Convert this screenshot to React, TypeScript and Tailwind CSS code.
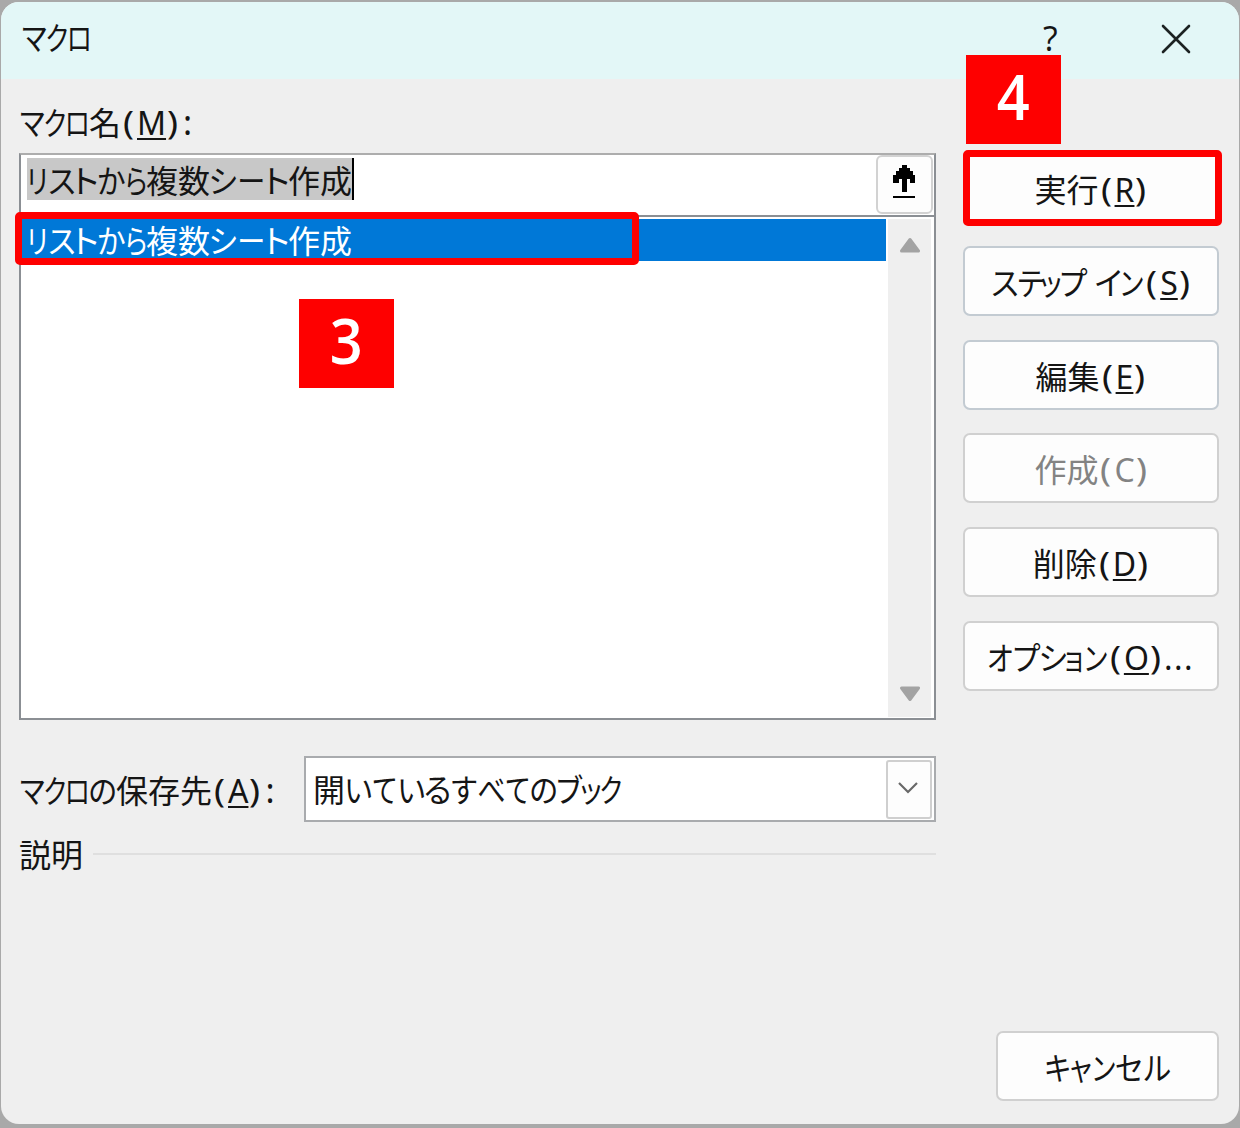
import type { ReactNode } from "react";

type Metric = {
  /** horizontal advance at 32px */
  adv: number;
  /** ink start and end inside the advance */
  ink: [number, number];
  /** ink start and end of the full-width glyph, in em */
  em: [number, number];
};

const KANA: Record<string, Metric> = {
  マ: { adv: 24.5, ink: [1.7, 24.5], em: [0.09, 0.91] },
  ク: { adv: 22.5, ink: [1.5, 20.7], em: [0.1, 0.87] },
  ロ: { adv: 23, ink: [2, 20.7], em: [0.14, 0.87] },
  の: { adv: 27, ink: [1, 26.3], em: [0.07, 0.93] },
  リ: { adv: 20.5, ink: [3.5, 18], em: [0.22, 0.78] },
  ス: { adv: 26.5, ink: [1.7, 26], em: [0.1, 0.9] },
  ト: { adv: 23.5, ink: [5, 22.7], em: [0.33, 0.86] },
  か: { adv: 26, ink: [0.5, 26], em: [0.06, 0.94] },
  ら: { adv: 22.5, ink: [3.3, 20.5], em: [0.16, 0.83] },
  シ: { adv: 26.5, ink: [1.5, 25.5], em: [0.11, 0.9] },
  ー: { adv: 28, ink: [3, 25.5], em: [0.1, 0.9] },
  い: { adv: 27, ink: [1.7, 26], em: [0.09, 0.92] },
  て: { adv: 25.5, ink: [1.7, 24], em: [0.08, 0.92] },
  る: { adv: 26, ink: [2, 24], em: [0.15, 0.86] },
  す: { adv: 26, ink: [0.5, 25.5], em: [0.06, 0.94] },
  べ: { adv: 28, ink: [1.5, 27], em: [0.04, 0.95] },
  ブ: { adv: 26, ink: [1, 25], em: [0.12, 0.95] },
  ッ: { adv: 17, ink: [-0.5, 16.5], em: [0.2, 0.82] },
  テ: { adv: 25.5, ink: [1, 25], em: [0.09, 0.91] },
  プ: { adv: 27, ink: [1.5, 27], em: [0.12, 0.98] },
  イ: { adv: 25, ink: [1, 24.5], em: [0.08, 0.84] },
  ン: { adv: 24, ink: [1.5, 22], em: [0.11, 0.9] },
  オ: { adv: 25, ink: [0.5, 24.5], em: [0.07, 0.93] },
  ョ: { adv: 17.5, ink: [1, 15], em: [0.23, 0.78] },
  キ: { adv: 25, ink: [1, 24.5], em: [0.09, 0.92] },
  ャ: { adv: 22.5, ink: [1, 21], em: [0.14, 0.88] },
  セ: { adv: 26.5, ink: [1, 26], em: [0.08, 0.93] },
  ル: { adv: 28, ink: [1, 27], em: [0.05, 0.95] },
};

function Kana({ ch }: { ch: string }) {
  const { adv, ink, em } = KANA[ch];
  const scale = (ink[1] - ink[0]) / ((em[1] - em[0]) * 32);
  const shift = ink[0] - em[0] * 32 * scale;
  return (
    <span className="inline-block shrink-0" style={{ width: adv }}>
      <span
        className="inline-block w-8 origin-left"
        style={{ transform: `translateX(${shift}px) scaleX(${scale})` }}
      >
        {ch}
      </span>
    </span>
  );
}

type UiTextProps = { text: string; hotkey?: string; tail?: string; disabled?: boolean; className?: string };

function UiText({ text, hotkey, tail, disabled = false, className = "" }: UiTextProps) {
  return (
    <span className={`flex h-8 items-baseline text-left text-[32px] leading-8 whitespace-pre ${className}`}>
      {[...text].map((ch, i) =>
        KANA[ch] ? (
          <Kana key={i} ch={ch} />
        ) : (
          <span key={i} className={ch === " " ? "w-2 shrink-0" : "w-8 shrink-0"}>
            {ch}
          </span>
        ),
      )}
      {hotkey && (
        <span className="flex items-baseline pl-[2px] font-['Noto_Sans']">
          <span className="w-[14px] origin-left scale-x-115">(</span>
          <span className={disabled ? "" : "underline decoration-2 underline-offset-[3px]"}>{hotkey}</span>
          <span className="ml-px w-[12px] origin-left scale-x-115">)</span>
          {tail && <span className={tail === ":" ? "ml-[4px] text-[34px]" : "ml-[2px] tracking-[1.5px]"}>{tail}</span>}
        </span>
      )}
    </span>
  );
}

function PushButton({ children, className = "w-[256px] border-[#d0d0d0]" }: { children: ReactNode; className?: string }) {
  return (
    <button className={`flex h-[70px] shrink-0 items-start justify-center rounded-[7px] border-2 bg-[#fdfdfd] pt-[17px] ${className}`}>
      {children}
    </button>
  );
}

function Step({ n, className }: { n: number; className: string }) {
  return (
    <div className={`absolute flex h-[89px] w-[95px] justify-center bg-[#fe0000] font-['Open_Sans'] text-[64px] leading-[81px] font-semibold text-white ${className}`}>
      <span className="scale-x-90">{n}</span>
    </div>
  );
}

export default function App() {
  return (
    <div className="relative h-[1128px] w-[1240px] overflow-hidden bg-[#a9a9a9] pt-[2px] pl-px font-['Noto_Sans_CJK_JP',sans-serif] text-[#151515]">
      <div className="flex h-[1122px] w-[1238px] flex-col overflow-hidden rounded-[18px] bg-[#efefef]">
        <header className="flex h-[77px] shrink-0 items-start bg-[#e3f7f7] pl-[20px]">
          <UiText text="マクロ" className="mt-[18px]" />
          <span className="mt-[16px] ml-auto w-[16px] font-['Open_Sans'] text-[34px] leading-[40px]">?</span>
          <svg className="mt-[22px] mr-[48px] ml-[102px]" width="30" height="30" viewBox="0 0 30 30" fill="none" stroke="#1c2222" strokeWidth="2.6" strokeLinecap="round">
            <path d="M2 2 28 28M28 2 2 28" />
          </svg>
        </header>

        <div className="flex flex-1 pl-[18px]">
          <main className="flex w-[917px] flex-col">
            <UiText text="マクロ名" hotkey="M" tail=":" className="mt-[26px]" />
            <section className="mt-[16px] flex h-[567px] flex-col border-2 border-[#8b8f94] border-t-[#adadad] bg-white">
              <div className="flex h-[62px] border-b-2 border-[#8b8f94] pl-[6px]">
                <div className="mt-[3px] flex h-[42px] items-start border-r-2 border-black bg-[#c8c8c8] pt-[5px]">
                  <UiText text="リストから複数シート作成" />
                </div>
                <button className="mr-px ml-auto flex h-[59px] w-[57px] items-start justify-center rounded-[6px] border-2 border-[#d2d2d2] bg-[#fdfdfd]">
                  <svg className="mt-[8px] mr-[2px]" width="22" height="34" viewBox="0 0 22 34" fill="#000">
                    <path d="M9 0h5v3h3v3h3v4h2v8h-5v-4h-3v13H9V14H6v4H0v-8h3V6h3V3h3z" />
                    <path d="M0 31h22v2H0z" />
                  </svg>
                </button>
              </div>
              <div className="flex flex-1 pt-[2px] pb-px">
                <div className="w-[865px]">
                  <div className="flex h-[42px] items-start bg-[#0078d7] pt-[4px] pl-[6px] text-white">
                    <UiText text="リストから複数シート作成" />
                  </div>
                </div>
                <div className="ml-[2px] flex w-[43px] flex-col items-center justify-between bg-[#efefef] pt-[18px] pb-[15px]">
                  <svg width="20" height="16" viewBox="0 0 20 16" fill="#a3a3a3" stroke="#a3a3a3" strokeWidth="3" strokeLinejoin="round">
                    <path d="M10 2.5 18.5 14H1.5z" />
                  </svg>
                  <svg width="20" height="16" viewBox="0 0 20 16" fill="#a3a3a3" stroke="#a3a3a3" strokeWidth="3" strokeLinejoin="round">
                    <path d="M10 13.5 18.5 2H1.5z" />
                  </svg>
                </div>
              </div>
            </section>

            <div className="mt-[36px] flex h-[66px]">
              <UiText text="マクロの保存先" hotkey="A" tail=":" className="mt-[17px] w-[285px]" />
              <div className="flex flex-1 border-2 border-[#a9abae] bg-white pr-[2px] pl-[7px]">
                <UiText text="開いているすべてのブック" className="mt-[14px]" />
                <button className="mt-[2px] ml-auto flex h-[59px] w-[46px] items-center justify-center rounded-[3px] border-2 border-[#cfcfcf] bg-[#fdfdfd]">
                  <svg className="mr-[3px] mb-[4px]" width="22" height="14" viewBox="0 0 22 14" fill="none" stroke="#686868" strokeWidth="2.2">
                    <path d="m2 2 9 9 9-9" />
                  </svg>
                </button>
              </div>
            </div>

            <div className="mt-[15px] flex h-8">
              <UiText text="説明" className="w-[74px]" />
              <hr className="mt-[16px] flex-1 border-0 border-t-2 border-[#dfdfdf]" />
            </div>
          </main>

          <aside className="ml-[27px] flex w-[256px] flex-col gap-[23.6px] pt-[73.7px]">
            <PushButton>
              <UiText text="実行" hotkey="R" />
            </PushButton>
            <PushButton className="w-[256px] border-[#c3cbd2]">
              <UiText text="ステップ イン" hotkey="S" />
            </PushButton>
            <PushButton className="w-[256px] border-[#c3cbd2]">
              <UiText text="編集" hotkey="E" />
            </PushButton>
            <PushButton className="w-[256px] border-[#d0d0d0] text-[#838383]">
              <UiText text="作成" hotkey="C" disabled />
            </PushButton>
            <PushButton>
              <UiText text="削除" hotkey="D" />
            </PushButton>
            <PushButton>
              <UiText text="オプション" hotkey="O" tail="..." />
            </PushButton>
            <PushButton className="mt-auto mb-[23px] ml-auto w-[223px] border-[#d0d0d0]">
              <UiText text="キャンセル" />
            </PushButton>
          </aside>
        </div>
      </div>

      <div className="absolute top-[212px] left-[15px] h-[53px] w-[624px] rounded-[5px] border-[7px] border-[#fe0000]" />
      <div className="absolute top-[150px] left-[963px] h-[76px] w-[259px] rounded-[5px] border-[7px] border-[#fe0000]" />
      <Step n={3} className="top-[299px] left-[299px]" />
      <Step n={4} className="top-[55px] left-[966px]" />
    </div>
  );
}
